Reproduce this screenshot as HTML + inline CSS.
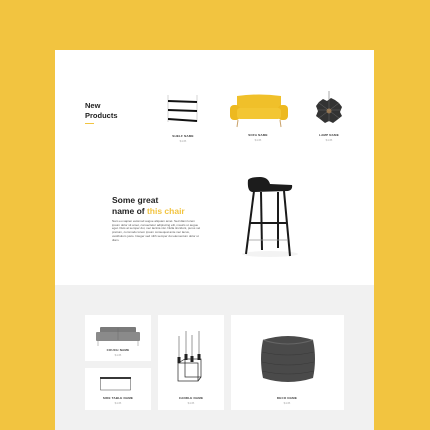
<!DOCTYPE html>
<html><head><meta charset="utf-8"><style>
*{margin:0;padding:0;box-sizing:border-box}
body{width:430px;height:430px;background:#f2c440;position:relative;overflow:hidden;font-family:"Liberation Sans",sans-serif}
.a{position:absolute}
.lbl{position:absolute;font-size:3px;color:#333;text-align:center;letter-spacing:.2px;font-weight:bold}
.pr{position:absolute;font-size:3px;color:#aaa;text-align:center}
.card{position:absolute;background:#fff}
</style></head><body>
<div class="a" style="left:55px;top:50px;width:319px;height:235px;background:#fff"></div>
<div class="a" style="left:55px;top:285px;width:319px;height:145px;background:#f1f1f1"></div>

<div class="a" style="left:85px;top:101px;font-size:7.5px;font-weight:bold;line-height:10px;color:#222">New<br>Products</div>
<div class="a" style="left:85px;top:123px;width:9px;height:1px;background:#f2c440"></div>

<svg class="a" style="left:166px;top:94px" width="34" height="30" viewBox="0 0 34 30">
<g stroke="#bbb" stroke-width=".6"><line x1="2" y1="1" x2="2" y2="28"/><line x1="31" y1="1" x2="31" y2="28"/></g>
<g stroke="#111" stroke-width="2"><line x1="2" y1="7" x2="31" y2="8"/><line x1="2" y1="16" x2="31" y2="17"/><line x1="2" y1="25" x2="31" y2="27"/></g></svg>
<div class="lbl" style="left:163px;top:134px;width:40px">SHELF NAME</div>
<div class="pr" style="left:163px;top:139px;width:40px">$145</div>

<svg class="a" style="left:229px;top:94px" width="60" height="34" viewBox="0 0 60 34">
<path d="M8 2 Q30 -1 52 2 L52 14 L8 14Z" fill="#f0c02a"/>
<rect x="1" y="11" width="10" height="15" rx="4" fill="#edb920"/>
<rect x="49" y="11" width="10" height="15" rx="4" fill="#edb920"/>
<rect x="8" y="14" width="44" height="11" rx="3" fill="#f3c633"/>
<g stroke="#c9a26a" stroke-width="1"><line x1="9" y1="26" x2="8" y2="33"/><line x1="51" y1="26" x2="52" y2="33"/></g></svg>
<div class="lbl" style="left:238px;top:133px;width:40px">SOFA NAME</div>
<div class="pr" style="left:238px;top:138px;width:40px">$145</div>

<svg class="a" style="left:313px;top:91px" width="32" height="34" viewBox="0 0 32 34">
<line x1="16" y1="0" x2="16" y2="8" stroke="#555" stroke-width=".5"/>
<path d="M10 8 L14 10 L18 7 L22 9 L26 12 L29 16 L27 21 L29 25 L24 29 L20 32 L16 30 L12 32 L7 28 L3 25 L5 20 L3 15 L6 11Z" fill="#333"/>
<g stroke="#777" stroke-width=".4" fill="none"><path d="M6 12 L26 27 M26 12 L6 27 M16 8 L16 31 M4 19 L28 19"/></g>
<circle cx="16" cy="20" r="2.5" fill="#b58a5a" opacity=".7"/></svg>
<div class="lbl" style="left:309px;top:133px;width:40px">LAMP NAME</div>
<div class="pr" style="left:309px;top:138px;width:40px">$145</div>

<div class="a" style="left:112px;top:195px;font-size:8.5px;font-weight:bold;line-height:11px;color:#222">Some great<br>name of <span style="color:#f2c440">this chair</span></div>
<div class="a" style="left:112px;top:220px;width:90px;font-size:3px;line-height:3.7px;color:#555">Nam eu sapien euismod augue aliquam amet. Sed diam lorem ipsum dolor sit amet, consectetur adipiscing elit, mauris ut augue eget. Duis at semper dui, nec lacinia nisi. Nulla tincidunt, purus vel pretium, commodo lorem ipsum consequat ante nec lacus, vestibulum justo. Integer sed nibh semper dui elementum dolor ut diam.</div>

<svg class="a" style="left:240px;top:176px" width="60" height="82" viewBox="0 0 60 82">
<ellipse cx="30" cy="78" rx="28" ry="3" fill="#f3f3f3"/>
<path d="M8 4 Q10 1 20 1 Q28 1 30 8 L52 9 Q53 14 48 15 L12 16 Q7 15 8 4Z" fill="#1c1c1c"/>
<g stroke="#1a1a1a" stroke-width="2"><line x1="14" y1="15" x2="6" y2="78"/><line x1="44" y1="15" x2="50" y2="80"/><line x1="21" y1="16" x2="22" y2="74"/><line x1="38" y1="16" x2="38" y2="72"/><line x1="10" y1="47" x2="47" y2="47"/></g>
<line x1="9" y1="64" x2="48" y2="64" stroke="#999" stroke-width=".8"/></svg>

<div class="card" style="left:85px;top:315px;width:66px;height:46px"></div>
<svg class="a" style="left:95px;top:325px" width="46" height="22" viewBox="0 0 46 22">
<rect x="5" y="2" width="36" height="9" rx="1" fill="#7a7a7a"/><rect x="1" y="7" width="44" height="9" rx="1" fill="#8a8a8a"/>
<line x1="23" y1="3" x2="23" y2="15" stroke="#666" stroke-width=".4"/>
<g stroke="#999" stroke-width=".6"><line x1="3" y1="16" x2="3" y2="21"/><line x1="43" y1="16" x2="43" y2="21"/></g></svg>
<div class="lbl" style="left:98px;top:348px;width:40px">COUCH NAME</div>
<div class="pr" style="left:98px;top:353px;width:40px">$145</div>

<div class="card" style="left:85px;top:368px;width:66px;height:42px"></div>
<svg class="a" style="left:100px;top:377px" width="36" height="14" viewBox="0 0 36 14">
<rect x="0" y="0" width="31" height="2" fill="#333"/><rect x=".5" y="1" width="30" height="12" fill="none" stroke="#444" stroke-width=".5"/></svg>
<div class="lbl" style="left:98px;top:396px;width:40px">SIDE TABLE NAME</div>
<div class="pr" style="left:98px;top:401px;width:40px">$145</div>

<div class="card" style="left:158px;top:315px;width:66px;height:95px"></div>
<svg class="a" style="left:175px;top:325px" width="32" height="60" viewBox="0 0 32 60">
<g fill="#ccc"><rect x="3" y="11" width="2" height="22"/><rect x="10" y="6" width="2" height="24"/><rect x="16" y="10" width="2" height="22"/><rect x="23" y="6" width="2" height="24"/></g>
<g fill="#222"><rect x="2.5" y="32" width="3" height="6"/><rect x="9.5" y="29" width="3" height="6"/><rect x="15.5" y="31" width="3" height="6"/><rect x="22.5" y="29" width="3" height="6"/></g>
<g fill="none" stroke="#222" stroke-width=".7"><rect x="3" y="38" width="20" height="18"/><rect x="10" y="34" width="16" height="18"/><line x1="3" y1="38" x2="10" y2="34"/><line x1="23" y1="56" x2="26" y2="52"/></g></svg>
<div class="lbl" style="left:171px;top:396px;width:40px">CANDLE NAME</div>
<div class="pr" style="left:171px;top:401px;width:40px">$145</div>

<div class="card" style="left:231px;top:315px;width:113px;height:95px"></div>
<svg class="a" style="left:259px;top:334px" width="58" height="50" viewBox="0 0 58 50">
<path d="M4 6 Q29 -2 54 6 Q58 25 54 44 Q29 52 4 44 Q0 25 4 6Z" fill="#4a4a4a"/>
<path d="M4 6 Q29 14 54 6" fill="none" stroke="#666" stroke-width="1"/>
<g stroke="#3a3a3a" stroke-width=".6" fill="none"><path d="M3 18 Q29 24 55 18"/><path d="M3 28 Q29 34 55 28"/><path d="M3 37 Q29 43 55 37"/></g></svg>
<div class="lbl" style="left:267px;top:396px;width:40px">DECO NAME</div>
<div class="pr" style="left:267px;top:401px;width:40px">$145</div>
</body></html>
